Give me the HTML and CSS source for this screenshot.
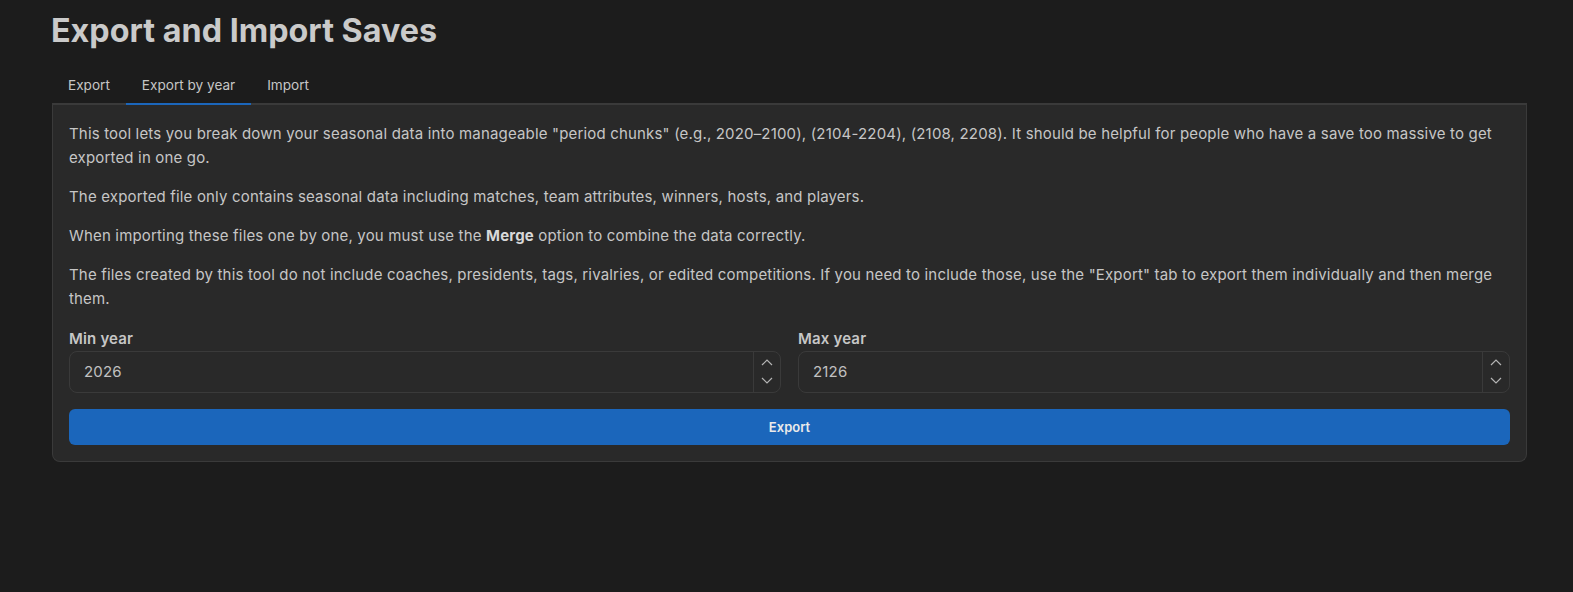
FILE: index.html
```html
<!DOCTYPE html>
<html lang="en">
<head>
  <meta charset="UTF-8" />
  <meta name="viewport" content="width=device-width, initial-scale=1.0" />
  <title>Export and Import Saves</title>
  <link rel="stylesheet" href="styles.css">
</head>
<body>
  <div class="page">
    <h1>Export and Import Saves</h1>

    <div class="tabs">
      <button class="tab">Export</button>
      <button class="tab active">Export by year</button>
      <button class="tab">Import</button>
    </div>

    <div class="panel">
      <p>This tool lets you break down your seasonal data into manageable "period chunks" (e.g., 2020–2100), (2104-2204), (2108, 2208). It should be helpful for people who have a save too massive to get exported in one go.</p>
      <p>The exported file only contains seasonal data including matches, team attributes, winners, hosts, and players.</p>
      <p>When importing these files one by one, you must use the <strong>Merge</strong> option to combine the data correctly.</p>
      <p>The files created by this tool do not include coaches, presidents, tags, rivalries, or edited competitions. If you need to include those, use the "Export" tab to export them individually and then merge them.</p>

      <div class="fields">
        <div class="field">
          <label>Min year</label>
          <div class="number-input">
            <span class="value">2026</span>
            <div class="stepper">
              <svg viewBox="0 0 12 7" width="12" height="7"><path d="M1 6 L6 1 L11 6" /></svg>
              <svg viewBox="0 0 12 7" width="12" height="7"><path d="M1 1 L6 6 L11 1" /></svg>
            </div>
          </div>
        </div>
        <div class="field">
          <label>Max year</label>
          <div class="number-input">
            <span class="value">2126</span>
            <div class="stepper">
              <svg viewBox="0 0 12 7" width="12" height="7"><path d="M1 6 L6 1 L11 6" /></svg>
              <svg viewBox="0 0 12 7" width="12" height="7"><path d="M1 1 L6 6 L11 1" /></svg>
            </div>
          </div>
        </div>
      </div>

      <button class="export-btn">Export</button>
    </div>
  </div>
</body>
</html>
```

FILE: styles.css
```css
:root {
  --bg: #1c1c1c;
  --panel-bg: #292929;
  --border: #3a3a3a;
  --text: #c6c6c6;
  --heading: #cacaca;
  --accent: #1b66bb;
}

* {
  box-sizing: border-box;
  margin: 0;
  padding: 0;
}

body {
  background: var(--bg);
  color: var(--text);
  font-family: Inter, 'Noto Sans', sans-serif;
  -webkit-font-smoothing: antialiased;
}

.page {
  padding: 0 46px 0 52px;
}

h1 {
  font-size: 32.3px;
  font-weight: 700;
  color: var(--heading);
  line-height: 38px;
  padding-top: 12px;
  margin-left: -1px;
}

.tabs {
  display: flex;
  margin-top: 24px;
  border-bottom: 2px solid var(--border);
}

.tab {
  background: none;
  border: none;
  color: var(--text);
  font-family: inherit;
  font-size: 13.6px;
  padding: 1px 16px 8px;
  line-height: 20px;
  margin-bottom: -2px;
  border-bottom: 2px solid transparent;
}

.tab.active {
  border-bottom-color: var(--accent);
}

.panel {
  background: var(--panel-bg);
  border: 1px solid var(--border);
  border-top: none;
  border-radius: 0 0 8px 8px;
  padding: 17px 16px 16px;
  font-size: 15px;
  line-height: 24px;
  letter-spacing: 0.17px;
}

.panel p {
  margin-bottom: 15px;
}

.panel strong {
  font-weight: 700;
  color: #d8d8d8;
}

.fields {
  display: grid;
  grid-template-columns: 1fr 1fr;
  gap: 17px;
  margin-top: 18px;
}

.field label {
  display: block;
  font-weight: 600;
  font-size: 15px;
  line-height: 20px;
  margin-bottom: 2px;
}

.number-input {
  display: flex;
  height: 42px;
  border: 1px solid var(--border);
  border-radius: 8px;
}

.number-input .value {
  flex: 1;
  padding: 0 14px;
  line-height: 40px;
  font-size: 15px;
  color: #c0c0c0;
}

.stepper {
  width: 27px;
  border-left: 1px solid var(--border);
  display: flex;
  flex-direction: column;
  align-items: center;
  justify-content: space-between;
  padding: 7px 0 8px;
}

.stepper path {
  fill: none;
  stroke: #b4b4b4;
  stroke-width: 1.2;
}

.export-btn {
  display: block;
  width: 100%;
  height: 36px;
  margin-top: 16px;
  border: none;
  border-radius: 6px;
  background: var(--accent);
  color: #eaeaea;
  font-family: inherit;
  font-size: 13px;
  font-weight: 600;
}
```
